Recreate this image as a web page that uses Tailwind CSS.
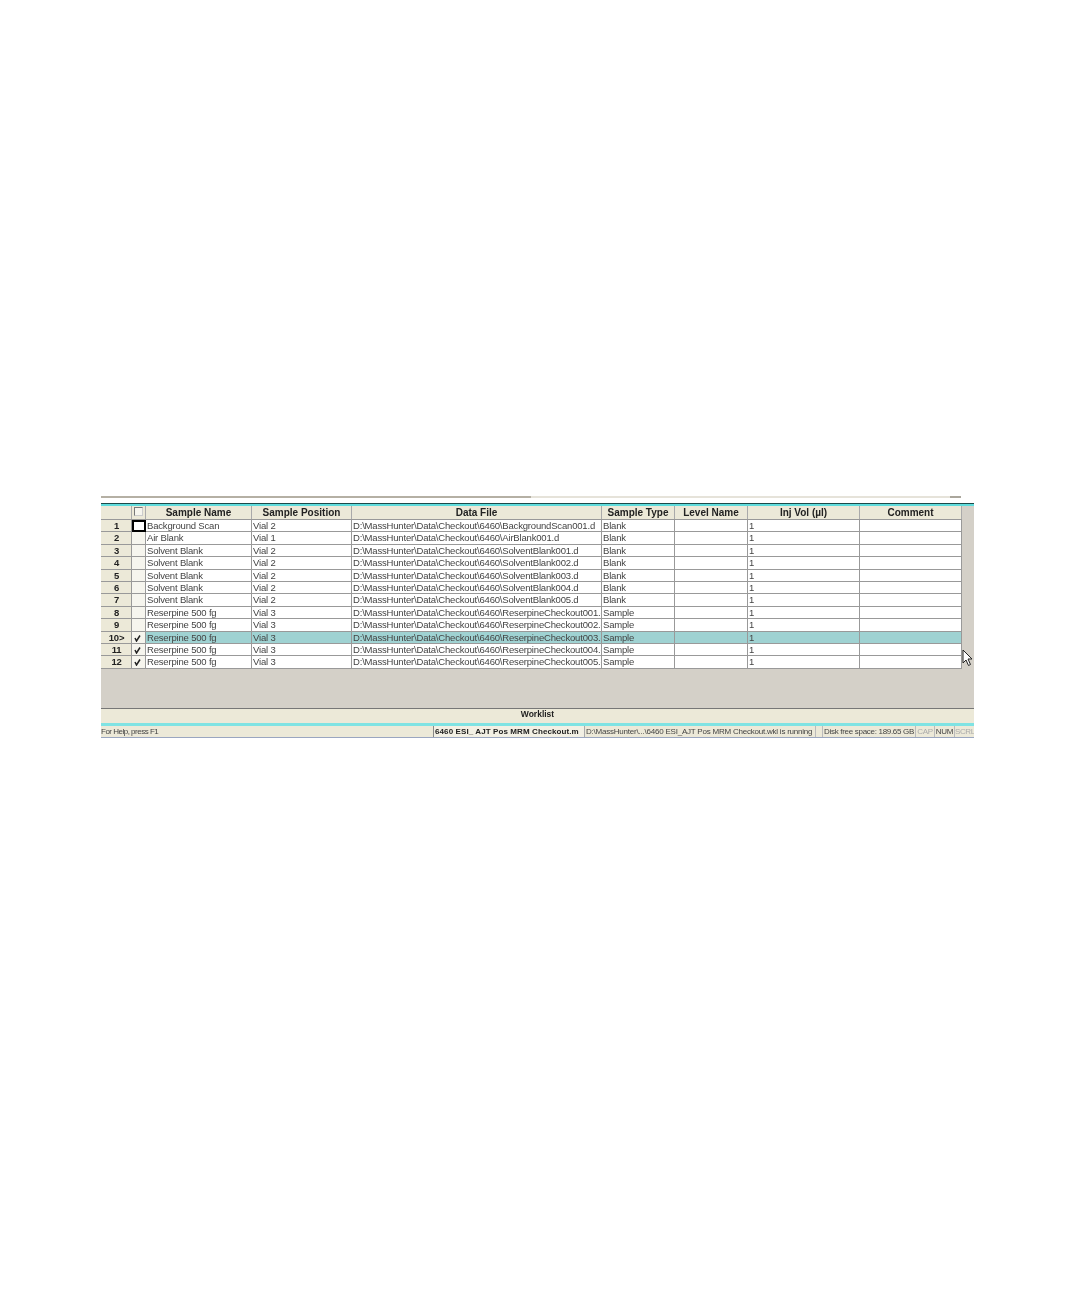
<!DOCTYPE html>
<html lang="en">
<head>
<meta charset="UTF-8">
<title>Worklist</title>
<script src="https://cdn.jsdelivr.net/npm/@tailwindcss/browser@4"></script>
</head>
<body class="bg-white">
<div class="h-[1296px] pt-[496px] pl-[101px] font-['Liberation_Sans',Arial,sans-serif] text-[9.5px] leading-[12px] text-[#444]">
  <div class="relative w-[873px] overflow-hidden blur-[0.3px]">

    <!-- top toolbar edge -->
    <div class="h-[7px] flex items-start">
      <div class="h-[2px] w-[430px] bg-[#b5b0a4]"></div>
      <div class="h-[2px] w-[419px] bg-[#e6e3da]"></div>
      <div class="h-[2px] w-[11px] bg-[#aaa69c]"></div>
    </div>
    <div class="h-[3px] bg-[#5fdcdc] border-t border-[#1c4a4a]"></div>

    <div class="flex">
      <div class="w-[861px]">
        <!-- header -->
        <div class="grid grid-cols-[31px_14px_106px_100px_250px_73px_73px_112px_102px] h-[14px] bg-[#ece9d8] border-b border-[#999] font-bold text-[10px] text-[#222] text-center [&>div]:border-r [&>div]:border-[#aaa] [&>div]:h-[13px] [&>div]:pt-[1px]">
          <div></div>
          <div class="relative"><span class="absolute left-[2px] top-[1px] w-[9px] h-[9px] bg-[#f6f5ee] border border-[#777] border-r-[#ccc] border-b-[#ccc]"></span></div>
          <div>Sample Name</div>
          <div>Sample Position</div>
          <div>Data File</div>
          <div>Sample Type</div>
          <div>Level Name</div>
          <div>Inj Vol (µl)</div>
          <div>Comment</div>
        </div>

        <!-- rows -->
        <div class="grid grid-cols-[31px_14px_106px_100px_250px_73px_73px_112px_102px] auto-rows-[12.42px] bg-[#ece9d8] tracking-[-0.18px] whitespace-nowrap [&>div]:overflow-hidden [&>div]:border-b [&>div]:border-r [&>div]:border-[#999] [&>div]:pl-[1px]">
          <div class="text-center font-bold text-[#222]">1</div><div class="!border-2 !border-black bg-white"></div><div class="bg-white">Background Scan</div><div class="bg-white">Vial 2</div><div class="bg-white">D:\MassHunter\Data\Checkout\6460\BackgroundScan001.d</div><div class="bg-white">Blank</div><div class="bg-white"></div><div class="bg-white">1</div><div class="bg-white"></div>
          <div class="text-center font-bold text-[#222]">2</div><div class="bg-[#f6f5ee]"></div><div class="bg-white">Air Blank</div><div class="bg-white">Vial 1</div><div class="bg-white">D:\MassHunter\Data\Checkout\6460\AirBlank001.d</div><div class="bg-white">Blank</div><div class="bg-white"></div><div class="bg-white">1</div><div class="bg-white"></div>
          <div class="text-center font-bold text-[#222]">3</div><div class="bg-[#f6f5ee]"></div><div class="bg-white">Solvent Blank</div><div class="bg-white">Vial 2</div><div class="bg-white">D:\MassHunter\Data\Checkout\6460\SolventBlank001.d</div><div class="bg-white">Blank</div><div class="bg-white"></div><div class="bg-white">1</div><div class="bg-white"></div>
          <div class="text-center font-bold text-[#222]">4</div><div class="bg-[#f6f5ee]"></div><div class="bg-white">Solvent Blank</div><div class="bg-white">Vial 2</div><div class="bg-white">D:\MassHunter\Data\Checkout\6460\SolventBlank002.d</div><div class="bg-white">Blank</div><div class="bg-white"></div><div class="bg-white">1</div><div class="bg-white"></div>
          <div class="text-center font-bold text-[#222]">5</div><div class="bg-[#f6f5ee]"></div><div class="bg-white">Solvent Blank</div><div class="bg-white">Vial 2</div><div class="bg-white">D:\MassHunter\Data\Checkout\6460\SolventBlank003.d</div><div class="bg-white">Blank</div><div class="bg-white"></div><div class="bg-white">1</div><div class="bg-white"></div>
          <div class="text-center font-bold text-[#222]">6</div><div class="bg-[#f6f5ee]"></div><div class="bg-white">Solvent Blank</div><div class="bg-white">Vial 2</div><div class="bg-white">D:\MassHunter\Data\Checkout\6460\SolventBlank004.d</div><div class="bg-white">Blank</div><div class="bg-white"></div><div class="bg-white">1</div><div class="bg-white"></div>
          <div class="text-center font-bold text-[#222]">7</div><div class="bg-[#f6f5ee]"></div><div class="bg-white">Solvent Blank</div><div class="bg-white">Vial 2</div><div class="bg-white">D:\MassHunter\Data\Checkout\6460\SolventBlank005.d</div><div class="bg-white">Blank</div><div class="bg-white"></div><div class="bg-white">1</div><div class="bg-white"></div>
          <div class="text-center font-bold text-[#222]">8</div><div class="bg-[#f6f5ee]"></div><div class="bg-white">Reserpine 500 fg</div><div class="bg-white">Vial 3</div><div class="bg-white">D:\MassHunter\Data\Checkout\6460\ReserpineCheckout001.d</div><div class="bg-white">Sample</div><div class="bg-white"></div><div class="bg-white">1</div><div class="bg-white"></div>
          <div class="text-center font-bold text-[#222]">9</div><div class="bg-[#f6f5ee]"></div><div class="bg-white">Reserpine 500 fg</div><div class="bg-white">Vial 3</div><div class="bg-white">D:\MassHunter\Data\Checkout\6460\ReserpineCheckout002.d</div><div class="bg-white">Sample</div><div class="bg-white"></div><div class="bg-white">1</div><div class="bg-white"></div>
          <div class="text-center font-bold text-[#222]">10&gt;</div><div class="bg-[#f6f5ee]"><svg class="ml-[1px] mt-[2px] w-[7px] h-[8px]" viewBox="0 0 7 8"><path d="M1 4l1.5 3L6 1.5" fill="none" stroke="#222" stroke-width="1.5"/></svg></div><div class="bg-[#9fd2d2]">Reserpine 500 fg</div><div class="bg-[#9fd2d2]">Vial 3</div><div class="bg-[#9fd2d2]">D:\MassHunter\Data\Checkout\6460\ReserpineCheckout003.d</div><div class="bg-[#9fd2d2]">Sample</div><div class="bg-[#9fd2d2]"></div><div class="bg-[#9fd2d2]">1</div><div class="bg-[#9fd2d2]"></div>
          <div class="text-center font-bold text-[#222]">11</div><div class="bg-[#f6f5ee]"><svg class="ml-[1px] mt-[2px] w-[7px] h-[8px]" viewBox="0 0 7 8"><path d="M1 4l1.5 3L6 1.5" fill="none" stroke="#222" stroke-width="1.5"/></svg></div><div class="bg-white">Reserpine 500 fg</div><div class="bg-white">Vial 3</div><div class="bg-white">D:\MassHunter\Data\Checkout\6460\ReserpineCheckout004.d</div><div class="bg-white">Sample</div><div class="bg-white"></div><div class="bg-white">1</div><div class="bg-white"></div>
          <div class="text-center font-bold text-[#222]">12</div><div class="bg-[#f6f5ee]"><svg class="ml-[1px] mt-[2px] w-[7px] h-[8px]" viewBox="0 0 7 8"><path d="M1 4l1.5 3L6 1.5" fill="none" stroke="#222" stroke-width="1.5"/></svg></div><div class="bg-white">Reserpine 500 fg</div><div class="bg-white">Vial 3</div><div class="bg-white">D:\MassHunter\Data\Checkout\6460\ReserpineCheckout005.d</div><div class="bg-white">Sample</div><div class="bg-white"></div><div class="bg-white">1</div><div class="bg-white"></div>
        </div>
      </div>
      <div class="flex-1 bg-[#d4d0c8]"></div>
    </div>

    <!-- empty grid area -->
    <div class="h-[40px] bg-[#d4d0c8] border-b border-[#777]"></div>

    <!-- worklist tab -->
    <div class="h-[14px] bg-[#ece9d8] text-center font-bold text-[8.5px] leading-[10px] text-[#222]">Worklist</div>
    <div class="h-[3px] bg-[#7fe3e3]"></div>

    <!-- status bar -->
    <div class="h-[12px] flex bg-[#ece9d8] border-b border-[#9aa6c0] text-[8px] leading-[12px] whitespace-nowrap">
      <div class="w-[332px] tracking-[-0.5px]">For Help, press F1</div>
      <div class="w-[151px] bg-[#f2f0e4] border-l border-[#888] pl-[1px] font-bold text-[#222] tracking-[0.1px]">6460 ESI_ AJT Pos MRM Checkout.m</div>
      <div class="w-[231px] border-l border-[#aaa] pl-[1px] overflow-hidden tracking-[-0.22px]">D:\MassHunter\...\6460 ESI_AJT Pos MRM Checkout.wkl is running</div>
      <div class="w-[8px] border-x border-[#bbb]"></div>
      <div class="w-[92px] pl-[1px] overflow-hidden tracking-[-0.3px]">Disk free space: 189.65 GB</div>
      <div class="w-[20px] border-x border-[#bbb] text-center text-[#aaa] overflow-hidden tracking-[-0.3px]">CAP</div>
      <div class="w-[19px] text-center overflow-hidden tracking-[-0.3px]">NUM</div>
      <div class="flex-1 border-l border-[#bbb] text-center text-[#aaa] overflow-hidden tracking-[-0.4px]">SCRL</div>
    </div>

    <!-- mouse pointer over the grid -->
    <svg class="absolute left-[861px] top-[153px] w-[11px] h-[18px]" viewBox="0 0 11 18"><path d="M1 1v13l3-3 2.5 5.5 2-1L6 10h4z" fill="#fff" stroke="#222" stroke-width="1"/></svg>
  </div>
</div>
</body>
</html>
